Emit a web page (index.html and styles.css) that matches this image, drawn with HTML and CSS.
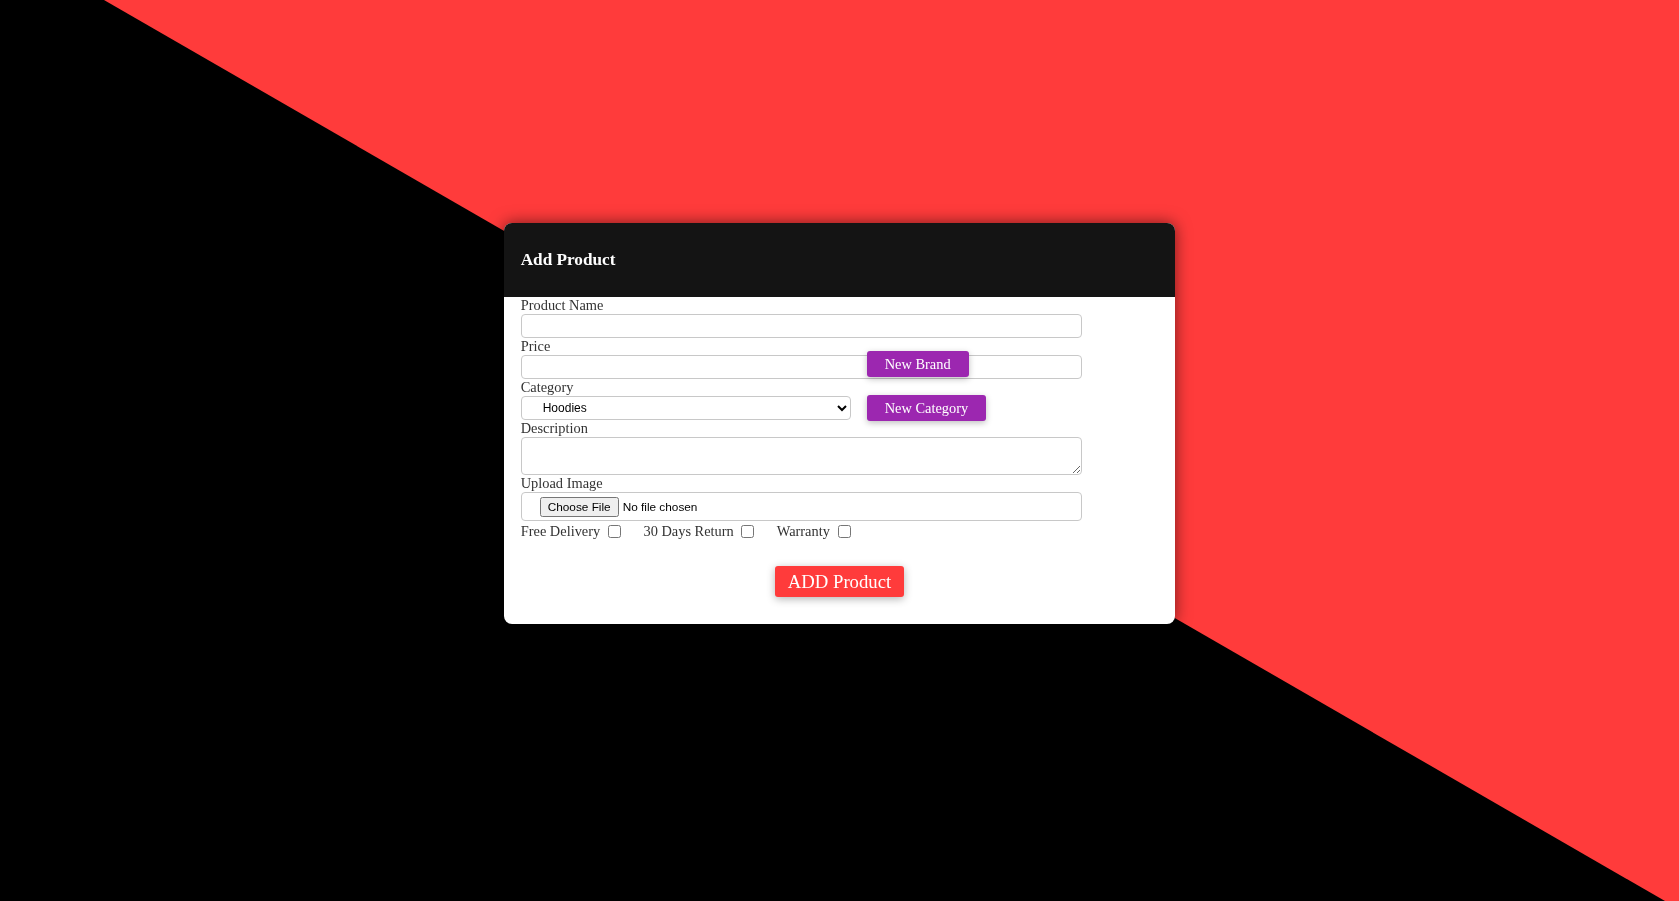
FILE: index.html
```html
<!DOCTYPE html>
<html lang="en">
<head>
<meta charset="utf-8">
<title>Add Product</title>
<link rel="stylesheet" href="styles.css">
</head>
<body>
<div class="backdrop"></div>
<div class="card">
  <div class="card-header"><h3 class="card-title">Add Product</h3></div>
  <form class="card-body">
    <label class="lbl">Product Name</label>
    <input class="field" type="text">
    <label class="lbl">Price</label>
    <div class="price-row">
      <input class="field" type="text">
      <button type="button" class="btn-purple btn-brand">New Brand</button>
    </div>
    <label class="lbl">Category</label>
    <div class="cat-row">
      <select class="select">
        <option>Hoodies</option>
        <option>T-Shirts</option>
      </select>
      <button type="button" class="btn-purple">New Category</button>
    </div>
    <label class="lbl">Description</label>
    <textarea class="field area"></textarea>
    <label class="lbl">Upload Image</label>
    <input class="field file" type="file">
    <div class="checks">
      <label class="chk">Free Delivery <input type="checkbox"></label>
      <label class="chk">30 Days Return <input type="checkbox"></label>
      <label class="chk">Warranty <input type="checkbox"></label>
    </div>
    <div class="submit-wrap">
      <button type="button" class="btn-add">ADD Product</button>
    </div>
  </form>
</div>
</body>
</html>
```
FILE: styles.css
```css
html, body {
  margin: 0;
  padding: 0;
}
body {
  background: #000;
  font-family: "Liberation Serif", "Times New Roman", serif;
  font-size: 14.4px;
  color: #333;
  min-height: 901px;
  overflow: hidden;
}
.backdrop {
  position: fixed;
  inset: 0;
  background: #ff3b3b;
  clip-path: polygon(104px 0, 100% 0, 100% 100%, 1665px 100%);
  z-index: 0;
}
.card {
  position: relative;
  z-index: 1;
  width: 40%;
  margin: 223px auto 0;
  background: #fff;
  border-radius: 8px;
  overflow: hidden;
  box-shadow: 0 0 16px rgba(0, 0, 0, 0.55);
}
.card-header {
  background: #141414;
  height: 74px;
  padding: 0 17px;
  display: flex;
  align-items: center;
}
.card-title {
  margin: 0;
  color: #fff;
  font-size: 17.2px;
  font-weight: bold;
}
.card-body {
  padding: 0 17px 27px;
}
.lbl {
  display: block;
  line-height: 17px;
  color: #333;
}
.field {
  display: block;
  box-sizing: border-box;
  width: 88%;
  height: 24px;
  border: 1px solid #c8c8c8;
  border-radius: 4px;
  padding: 0 18px;
  background: #fff;
  font-family: "Liberation Sans", Arial, sans-serif;
  font-size: 12px;
}
.price-row {
  position: relative;
}
.btn-purple {
  height: 26px;
  padding: 0 18px;
  border: none;
  border-radius: 3px;
  background: #9c27b0;
  color: #fff;
  font-family: "Liberation Serif", "Times New Roman", serif;
  font-size: 14.4px;
  box-shadow: 0 2px 6px rgba(0, 0, 0, 0.25);
}
.btn-brand {
  position: absolute;
  left: 346px;
  top: -4px;
}
.cat-row {
  display: flex;
  align-items: center;
  gap: 16px;
  height: 24px;
}
.select {
  box-sizing: border-box;
  width: 330px;
  height: 24px;
  border: 1px solid #c8c8c8;
  border-radius: 4px;
  padding: 0 0 0 17px;
  background: #fff;
  color: #000;
  font-family: "Liberation Sans", Arial, sans-serif;
  font-size: 12px;
}
.area {
  height: 38px;
  resize: vertical;
}
.file {
  height: 29px;
  padding: 4px 18px 0;
  color: #000;
  font-size: 11.8px;
}
.checks {
  height: 19px;
  line-height: 19px;
  margin-top: 1px;
}
.chk {
  margin-right: 16px;
  color: #333;
}
.chk input {
  vertical-align: -2px;
}
.submit-wrap {
  display: flex;
  justify-content: center;
  margin-top: 25px;
}
.btn-add {
  height: 31px;
  padding: 0 13px;
  border: none;
  border-radius: 3px;
  background: #ff3b3b;
  color: #fff;
  font-family: "Liberation Serif", "Times New Roman", serif;
  font-size: 18.72px;
  box-shadow: 0 2px 8px rgba(0, 0, 0, 0.3);
}
```
